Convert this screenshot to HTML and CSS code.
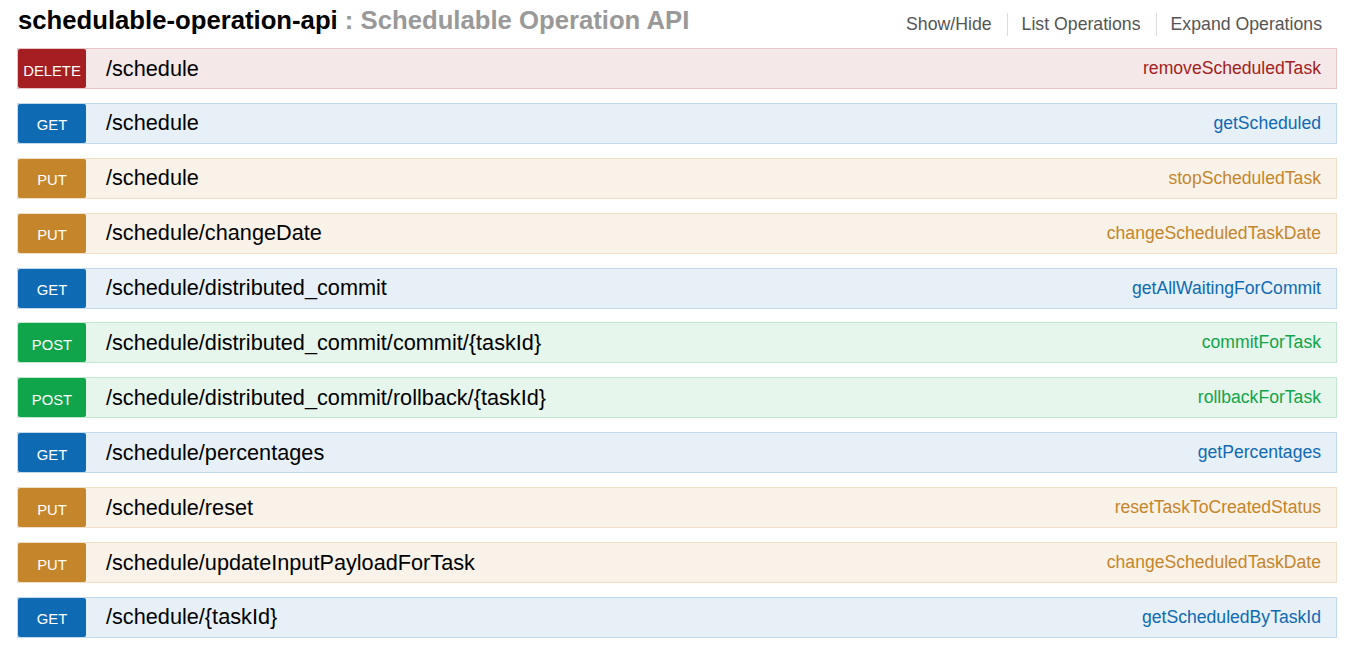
FILE: index.html
```html
<!DOCTYPE html>
<html>
<head>
<meta charset="utf-8">
<link rel="stylesheet" href="styles.css">
</head>
<body>
<div class="resource">
  <div class="heading">
    <h2 class="title"><span class="name">schedulable-operation-api</span><span class="desc"> : Schedulable Operation API</span></h2>
    <ul class="options">
      <li>Show/Hide</li>
      <li>List Operations</li>
      <li>Expand Operations</li>
    </ul>
  </div>
  <ul class="ops">
    <li class="op delete"><span class="method">DELETE</span><span class="path">/schedule</span><span class="nick">removeScheduledTask</span></li>
    <li class="op get"><span class="method">GET</span><span class="path">/schedule</span><span class="nick">getScheduled</span></li>
    <li class="op put"><span class="method">PUT</span><span class="path">/schedule</span><span class="nick">stopScheduledTask</span></li>
    <li class="op put"><span class="method">PUT</span><span class="path">/schedule/changeDate</span><span class="nick">changeScheduledTaskDate</span></li>
    <li class="op get"><span class="method">GET</span><span class="path">/schedule/distributed_commit</span><span class="nick">getAllWaitingForCommit</span></li>
    <li class="op post"><span class="method">POST</span><span class="path">/schedule/distributed_commit/commit/{taskId}</span><span class="nick">commitForTask</span></li>
    <li class="op post"><span class="method">POST</span><span class="path">/schedule/distributed_commit/rollback/{taskId}</span><span class="nick">rollbackForTask</span></li>
    <li class="op get"><span class="method">GET</span><span class="path">/schedule/percentages</span><span class="nick">getPercentages</span></li>
    <li class="op put"><span class="method">PUT</span><span class="path">/schedule/reset</span><span class="nick">resetTaskToCreatedStatus</span></li>
    <li class="op put"><span class="method">PUT</span><span class="path">/schedule/updateInputPayloadForTask</span><span class="nick">changeScheduledTaskDate</span></li>
    <li class="op get"><span class="method">GET</span><span class="path">/schedule/{taskId}</span><span class="nick">getScheduledByTaskId</span></li>
  </ul>
</div>
</body>
</html>
```

FILE: styles.css
```css
html, body {
  margin: 0;
  padding: 0;
  background: #fff;
  font-family: "Liberation Sans", Arial, sans-serif;
}

.resource {
  padding: 0 19px 0 17px;
}

.heading {
  display: flex;
  justify-content: space-between;
  align-items: flex-start;
  height: 48px;
}

.title {
  margin: 4px 0 0 1px;
  font-size: 25.7px;
  font-weight: bold;
  line-height: 32px;
}

.title .name {
  color: #000;
}

.title .desc {
  color: #999;
}

.options {
  list-style: none;
  margin: 13px 15px 0 0;
  padding: 0;
  display: flex;
}

.options li {
  font-size: 17.7px;
  color: #555;
  line-height: 23px;
  padding: 0 15px 0 14px;
  border-right: 1px solid #ddd;
}

.options li:last-child {
  border-right: none;
  padding-right: 0;
}

.ops {
  list-style: none;
  margin: 0;
  padding: 0;
  display: flex;
  flex-direction: column;
  gap: 13.9px;
}

.op {
  display: flex;
  align-items: center;
  height: 39px;
  border: 1px solid;
  padding-right: 15px;
}

.method {
  width: 68px;
  height: 39px;
  border-radius: 2px;
  color: #fff;
  font-size: 14.8px;
  display: flex;
  align-items: center;
  justify-content: center;
  padding-top: 4px;
  box-sizing: border-box;
  flex: none;
}

.path {
  margin-left: 20px;
  font-size: 21.7px;
  color: #000;
  flex: 1;
}

.nick {
  font-size: 17.6px;
}

.delete { background: #f5e8e8; border-color: #e8c6c7; }
.delete .method { background: #a41e22; }
.delete .nick { color: #a41e22; }

.get { background: #e7f0f7; border-color: #c3d9ec; }
.get .method { background: #0f6ab4; }
.get .nick { color: #0f6ab4; }

.put { background: #f9f2e9; border-color: #f0e0ca; }
.put .method { background: #c5862b; }
.put .nick { color: #c5862b; }

.post { background: #e7f6ec; border-color: #c3e8d1; }
.post .method { background: #10a54a; }
.post .nick { color: #10a54a; }
```
